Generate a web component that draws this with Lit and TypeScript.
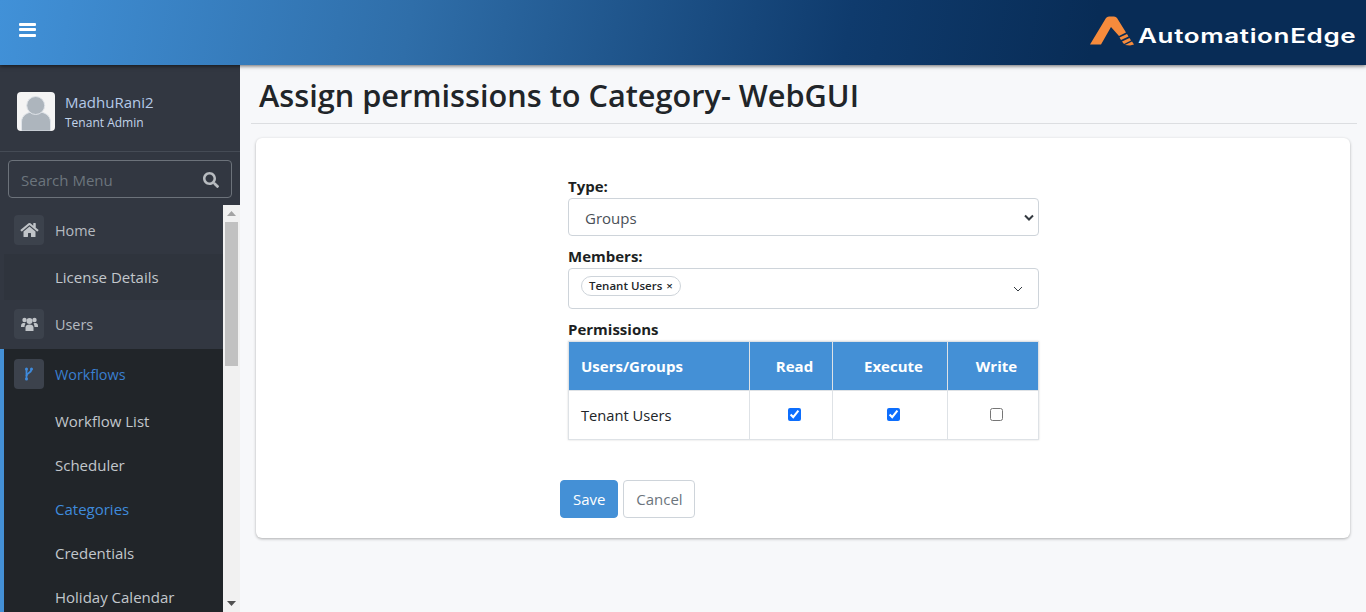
import { LitElement, html, css } from "lit";
import { customElement } from "lit/decorators.js";

const subItems = [
  { label: "Workflow List" },
  { label: "Scheduler" },
  { label: "Categories", active: true },
  { label: "Credentials" },
  { label: "Holiday Calendar" }
];

@customElement("app-root")
export class AppRoot extends LitElement {
  static styles = css`
    :host {
      display: block;
      height: 612px;
      overflow: hidden;
      background: #f7f8fa;
      font-family: "Open Sans", "Noto Sans", sans-serif;
      font-size: 15px;
      color: #212529;
    }

    * {
      box-sizing: border-box;
    }

    .topbar {
      position: relative;
      z-index: 2;
      height: 65px;
      display: flex;
      align-items: center;
      justify-content: space-between;
      padding: 0 10px 0 19px;
      background: linear-gradient(100deg, #4191d8 0%, #2f6ea9 30%, #0f3b6d 62%, #082c56 80%);
      box-shadow: 0 1px 4px rgba(0, 0, 0, 0.6);
    }

    .burger {
      width: 17px;
      height: 14px;
      margin-top: -6px;
      display: flex;
      flex-direction: column;
      justify-content: space-between;
    }

    .burger span {
      height: 3px;
      background: #fff;
      border-radius: 1px;
    }

    .logo {
      display: flex;
      align-items: flex-end;
      margin-top: -5px;
    }

    .logo svg {
      width: 44px;
      height: 32px;
      display: block;
    }

    .wordmark {
      display: inline-block;
      width: 218px;
      margin-left: 4px;
      font-family: "Inter", sans-serif;
      font-size: 20px;
      line-height: 20px;
      font-weight: 600;
      letter-spacing: 0.5px;
      color: #fff;
      white-space: nowrap;
      transform-origin: left bottom;
      transform: scaleX(1.3);
    }

    .body {
      display: flex;
      height: 547px;
    }

    .sidebar {
      width: 240px;
      flex-shrink: 0;
      display: flex;
      flex-direction: column;
      background: #323741;
    }

    .user {
      height: 87px;
      display: flex;
      align-items: center;
      gap: 10px;
      padding: 7px 17px 0;
      border-bottom: 1px solid #454b55;
    }

    .avatar {
      width: 38px;
      height: 39px;
      border-radius: 4px;
      background: #f4f4f4;
      overflow: hidden;
    }

    .avatar svg {
      display: block;
    }

    .name {
      font-size: 15px;
      line-height: 20px;
      color: #b4c9e8;
    }

    .role {
      font-size: 12px;
      line-height: 18px;
      margin-top: 2px;
      color: #c3d4ea;
    }

    .search {
      height: 38px;
      margin: 8px 8px 7px;
      padding: 1px 12px 0;
      display: flex;
      align-items: center;
      justify-content: space-between;
      border: 1px solid #6c727a;
      border-radius: 4px;
      color: #6c757d;
      font-size: 15px;
    }

    .nav-wrap {
      flex: 1;
      min-height: 0;
      display: flex;
    }

    .nav {
      width: 223px;
      overflow: hidden;
    }

    .row {
      display: flex;
      align-items: center;
      gap: 11px;
      padding-left: 14px;
      height: 49px;
      font-size: 14.4px;
      color: #b5bac0;
    }

    .row.home {
      padding-top: 1px;
    }

    .row.users {
      padding-bottom: 1px;
    }

    .icon {
      width: 30px;
      height: 30px;
      display: flex;
      align-items: center;
      justify-content: center;
      border-radius: 4px;
      background: #3c424c;
    }

    .license {
      height: 46px;
      margin-left: 4px;
      padding-left: 51px;
      display: flex;
      align-items: center;
      background: #2f343d;
      color: #c2c7cc;
    }

    .group {
      border-left: 4px solid #4490d6;
      background: #212529;
    }

    .group .row {
      padding-left: 10px;
      height: 50px;
      color: #3a7fd0;
    }

    .sub {
      height: 44px;
      display: flex;
      align-items: center;
      padding-left: 51px;
      white-space: nowrap;
      color: #c2c7cc;
    }

    .sub.active {
      color: #3f8bdc;
    }

    .scrollbar {
      width: 17px;
      display: flex;
      flex-direction: column;
      align-items: center;
      background: #f1f1f1;
    }

    .arrow {
      height: 17px;
      display: flex;
      align-items: center;
      justify-content: center;
    }

    .thumb {
      width: 13px;
      height: 144px;
      background: #c1c1c1;
    }

    .track {
      flex: 1;
    }

    .main {
      flex: 1;
      min-width: 0;
      padding: 0 9px 0 11px;
    }

    .title {
      height: 59px;
      margin: 0;
      padding: 1px 8px 0;
      display: flex;
      align-items: center;
      border-bottom: 1px solid #dcdee1;
      font-size: 30.7px;
      font-weight: 600;
      line-height: 36px;
      white-space: nowrap;
    }

    .card {
      height: 400px;
      margin: 14px 7px 0 5px;
      padding: 39px 0 0 312px;
      border-radius: 6px;
      background: #fff;
      box-shadow: 0 1px 3px rgba(0, 0, 0, 0.3);
    }

    .form {
      width: 471px;
    }

    label {
      display: block;
      height: 21px;
      line-height: 18px;
      font-weight: 700;
      font-size: 15px;
      color: #1c1f23;
    }

    .select {
      height: 38px;
      margin-bottom: 11px;
      padding: 1px 4px 0 16px;
      display: flex;
      align-items: center;
      justify-content: space-between;
      border: 1px solid #ced4da;
      border-radius: 4px;
      color: #495057;
    }

    .members {
      height: 41px;
      margin-bottom: 11px;
      padding: 0 15px 6px 12px;
    }

    .members svg {
      margin-top: 6px;
    }

    .chip {
      display: inline-flex;
      align-items: center;
      gap: 4px;
      height: 20px;
      padding: 0 7px;
      border: 1px solid #ced4da;
      border-radius: 10px;
      font-size: 11.5px;
      font-weight: 600;
      color: #212529;
    }

    table {
      width: 470px;
      table-layout: fixed;
      border-collapse: collapse;
      box-shadow: 0 0 2px rgba(0, 0, 0, 0.15);
    }

    th,
    td {
      border: 1px solid #dee2e6;
      text-align: center;
      padding-left: 8px;
    }

    th {
      height: 49px;
      background: #4490d6;
      color: #fff;
      font-size: 15px;
      font-weight: 700;
    }

    td {
      height: 49px;
      font-size: 14.7px;
      color: #212529;
    }

    th.left,
    td.left {
      text-align: left;
      padding-left: 12px;
    }

    input[type="checkbox"] {
      width: 13px;
      height: 13px;
      margin: 0;
      accent-color: #0d6efd;
    }

    .actions {
      display: flex;
      gap: 5px;
      margin: 40px 0 0 -8px;
    }

    button {
      height: 38px;
      padding: 0 12px;
      border-radius: 4px;
      font: inherit;
      cursor: pointer;
    }

    .save {
      background: #4490d6;
      border: 1px solid #4490d6;
      color: #fff;
    }

    .cancel {
      width: 72px;
      padding: 0;
      background: #fff;
      border: 1px solid #ced4da;
      color: #6c757d;
    }
  `;

  render() {
    return html`
      <div class="topbar">
        <div class="burger"><span></span><span></span><span></span></div>
        <div class="logo">
          <svg viewBox="0 0 44 32" aria-hidden="true">
            <g fill="#f68b3c">
              <path d="M0 30.500 L16 4 Q17 2.500 19 2.500 H24 Q26 2.500 27 4 L36 18.500 L29 22 L21 13 L11 30.500 Z" />
              <path d="M29.500 23.500 L37 20 L38.500 22.500 L31 26 Z" />
              <path d="M32 27.500 L39.500 24 L41 26.500 L34 30 Z" />
              <path d="M35 31 L42 27.500 L44 30.500 L40 31.500 Z" />
            </g>
          </svg>
          <span class="wordmark">AutomationEdge</span>
        </div>
      </div>
      <div class="body">
        <aside class="sidebar">
          <div class="user">
            <div class="avatar">
              <svg width="38" height="39" viewBox="0 0 38 39" aria-hidden="true">
                <path fill="#adb5bd" stroke="#dfe3e8" stroke-width="1" d="M4.500 39 V30 C4.500 23 11 19.500 19 19.500 C27 19.500 33.500 23 33.500 30 V39 Z" />
                <circle cx="18.700" cy="13.500" r="9" fill="#adb5bd" stroke="#dfe3e8" stroke-width="1" />
              </svg>
            </div>
            <div>
              <div class="name">MadhuRani2</div>
              <div class="role">Tenant Admin</div>
            </div>
          </div>
          <div class="search">
            <span>Search Menu</span>
            <svg width="16" height="16" viewBox="0 0 512 512" aria-hidden="true">
              <path fill="#b8bcc0" d="M505 442.700L405.300 343c-4.500-4.500-10.600-7-17-7H372c27.600-35.300 44-79.700 44-128C416 93.100 322.900 0 208 0S0 93.100 0 208s93.100 208 208 208c48.300 0 92.700-16.400 128-44v16.300c0 6.400 2.500 12.500 7 17l99.700 99.700c9.400 9.400 24.600 9.400 33.900 0l28.300-28.300c9.400-9.400 9.400-24.600.1-34zM208 336c-70.700 0-128-57.200-128-128 0-70.700 57.200-128 128-128 70.700 0 128 57.200 128 128 0 70.700-57.200 128-128 128z" />
            </svg>
          </div>
          <div class="nav-wrap">
            <nav class="nav">
              <div class="row home">
                <span class="icon">
                  <svg width="19" height="16" viewBox="0 0 576 512" aria-hidden="true">
                    <path fill="#c0c4c8" d="M280.400 148.300L96 300.100V464a16 16 0 0 0 16 16l112.100-.3a16 16 0 0 0 15.900-16V368a16 16 0 0 1 16-16h64a16 16 0 0 1 16 16v95.600a16 16 0 0 0 16 16.100L464 480a16 16 0 0 0 16-16V300L295.700 148.300a12.200 12.200 0 0 0-15.300 0zM571.600 251.500L488 182.600V44.100a12 12 0 0 0-12-12h-56a12 12 0 0 0-12 12v72.600L318.500 43a48 48 0 0 0-61 0L4.300 251.500a12 12 0 0 0-1.600 16.900l25.500 31A12 12 0 0 0 45.200 301l235.200-193.700a12.200 12.200 0 0 1 15.300 0L530.900 301a12 12 0 0 0 16.900-1.600l25.500-31a12 12 0 0 0-1.700-16.900z" />
                  </svg>
                </span>
                Home
              </div>
              <div class="license">License Details</div>
              <div class="row users">
                <span class="icon">
                  <svg width="17" height="14" viewBox="0 0 17 14" aria-hidden="true">
                    <g fill="#c0c4c8">
                      <circle cx="3.500" cy="3" r="2.200" />
                      <circle cx="13.500" cy="3" r="2.200" />
                      <circle cx="8.500" cy="4" r="3" />
                      <path d="M0 9 C0 6.500 1.500 6 3.500 6 L4.500 6.500 C4 7.500 3.500 8.500 3.500 10 H0 Z M17 9 C17 6.500 15.500 6 13.500 6 L12.500 6.500 C13 7.500 13.500 8.500 13.500 10 H17 Z M4.500 14 V10.500 C4.500 8.500 6 7.500 8.500 7.500 C11 7.500 12.500 8.500 12.500 10.500 V14 Z" />
                    </g>
                  </svg>
                </span>
                Users
              </div>
              <div class="group">
                <div class="row">
                  <span class="icon">
                    <svg width="10" height="14" viewBox="0 0 10 14" aria-hidden="true">
                      <g fill="none" stroke="#3f8bdc" stroke-width="1.800">
                        <path d="M2.500 2 V12" />
                        <path d="M7.500 2 C7.500 6.500 2.500 5.500 2.500 9" />
                      </g>
                      <circle cx="2.500" cy="2" r="1.500" fill="#3f8bdc" />
                      <circle cx="7.500" cy="2" r="1.500" fill="#3f8bdc" />
                      <circle cx="2.500" cy="12" r="1.500" fill="#3f8bdc" />
                    </svg>
                  </span>
                  Workflows
                </div>
                ${subItems.map(
                  (item) => html`<div class="sub ${item.active ? "active" : ""}">${item.label}</div>`
                )}
              </div>
            </nav>
            <div class="scrollbar">
              <div class="arrow">
                <svg width="9" height="5" viewBox="0 0 9 5" aria-hidden="true"><path fill="#a3a3a3" d="M0 5 L4.500 0 L9 5 Z" /></svg>
              </div>
              <div class="thumb"></div>
              <div class="track"></div>
              <div class="arrow">
                <svg width="9" height="5" viewBox="0 0 9 5" aria-hidden="true"><path fill="#505050" d="M0 0 H9 L4.500 5 Z" /></svg>
              </div>
            </div>
          </div>
        </aside>
        <main class="main">
          <h1 class="title">Assign permissions to Category- WebGUI</h1>
          <section class="card">
            <div class="form">
              <label>Type:</label>
              <div class="select">
                Groups
                <svg width="10" height="7" viewBox="0 0 10 7" aria-hidden="true">
                  <path d="M1 1.500 L5 5.500 L9 1.500" fill="none" stroke="#343a40" stroke-width="2" />
                </svg>
              </div>
              <label>Members:</label>
              <div class="select members">
                <span class="chip">Tenant Users <span>×</span></span>
                <svg width="10" height="6" viewBox="0 0 10 6" aria-hidden="true">
                  <path d="M1 1 L5 5 L9 1" fill="none" stroke="#343a40" stroke-width="1" />
                </svg>
              </div>
              <label>Permissions</label>
              <table>
                <colgroup>
                  <col style="width: 181px" />
                  <col style="width: 83px" />
                  <col style="width: 115px" />
                  <col style="width: 91px" />
                </colgroup>
                <tr>
                  <th class="left">Users/Groups</th>
                  <th>Read</th>
                  <th>Execute</th>
                  <th>Write</th>
                </tr>
                <tr>
                  <td class="left">Tenant Users</td>
                  <td><input type="checkbox" checked /></td>
                  <td><input type="checkbox" checked /></td>
                  <td><input type="checkbox" /></td>
                </tr>
              </table>
              <div class="actions">
                <button class="save">Save</button>
                <button class="cancel">Cancel</button>
              </div>
            </div>
          </section>
        </main>
      </div>
    `;
  }
}
